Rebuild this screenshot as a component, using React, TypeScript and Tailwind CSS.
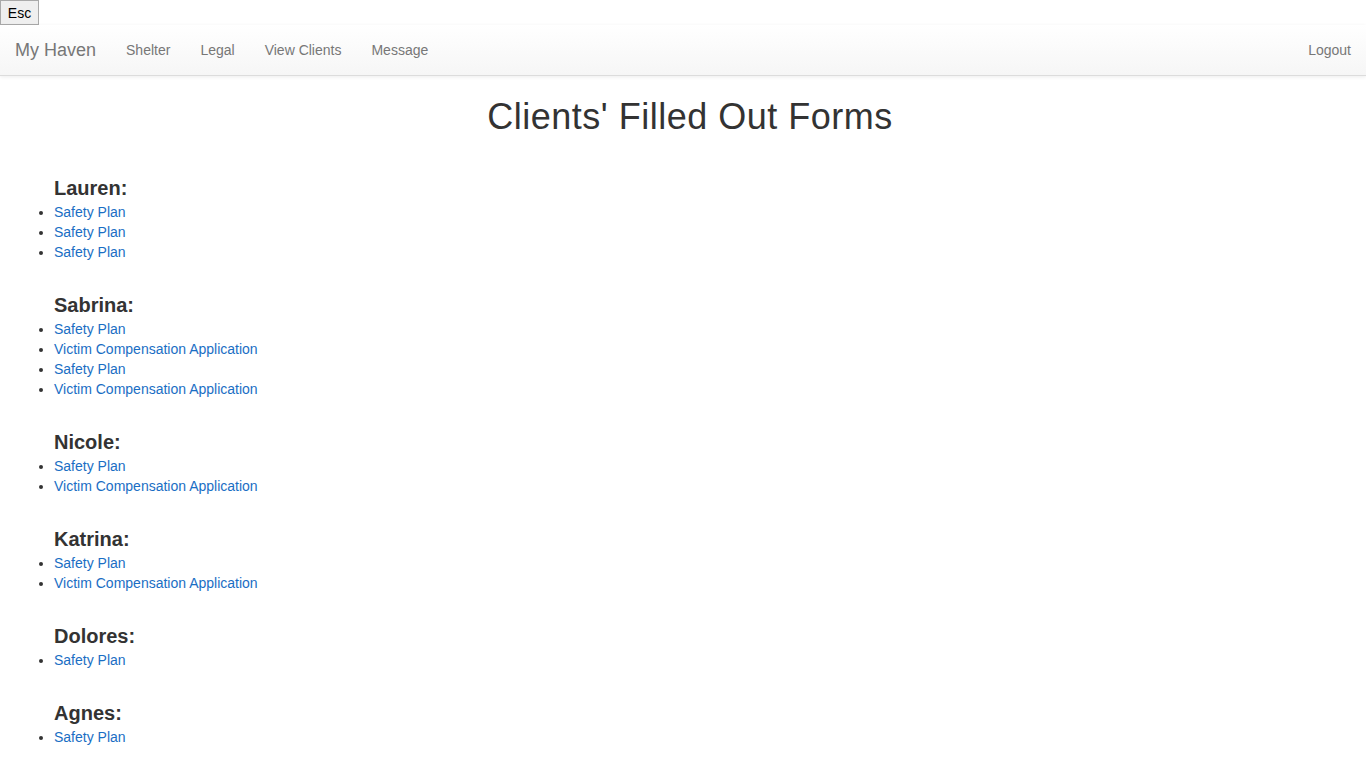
import React from 'react';

const clients: { name: string; forms: string[] }[] = [
  { name: 'Lauren', forms: ['Safety Plan', 'Safety Plan', 'Safety Plan'] },
  {
    name: 'Sabrina',
    forms: ['Safety Plan', 'Victim Compensation Application', 'Safety Plan', 'Victim Compensation Application'],
  },
  { name: 'Nicole', forms: ['Safety Plan', 'Victim Compensation Application'] },
  { name: 'Katrina', forms: ['Safety Plan', 'Victim Compensation Application'] },
  { name: 'Dolores', forms: ['Safety Plan'] },
  { name: 'Agnes', forms: ['Safety Plan'] },
];

const navLinks = ['Shelter', 'Legal', 'View Clients', 'Message'];

const App: React.FC = () => {
  return (
    <div className="min-h-screen bg-white text-[#333] font-['Liberation_Sans',Arial,sans-serif]">
      <button className="block h-[25px] w-[39px] border border-[#a9a9a9] bg-[#efefef] text-[14px] leading-none text-black">
        Esc
      </button>

      <nav className="flex h-[51px] items-center justify-between border-b border-[#dcdcdc] bg-gradient-to-b from-white to-[#f6f6f6] shadow-[0_1px_4px_rgba(0,0,0,0.08)]">
        <div className="flex items-center">
          <a className="px-[15px] text-[18px] text-[#777]">My Haven</a>
          {navLinks.map((link) => (
            <a key={link} className="px-[15px] text-[14px] text-[#777]">
              {link}
            </a>
          ))}
        </div>
        <a className="px-[15px] text-[14px] text-[#777]">Logout</a>
      </nav>

      <h1 className="mt-[21px] pl-[14px] text-center text-[36px] font-medium leading-[40px] tracking-[0.5px] text-[#333]">
        Clients' Filled Out Forms
      </h1>

      <div className="pt-[8px] pb-[20px]">
        {clients.map((client) => (
          <section key={client.name} className="mt-[31px]">
            <h3 className="pl-[54px] text-[20px] font-bold leading-[24px] text-[#333]">{client.name}:</h3>
            <ul className="mt-[2px] list-disc pl-[54px] text-[14px] leading-[20px]">
              {client.forms.map((form, i) => (
                <li key={i}>
                  <a className="text-[#1a6ec4]">{form}</a>
                </li>
              ))}
            </ul>
          </section>
        ))}
      </div>
    </div>
  );
};

export default App;
